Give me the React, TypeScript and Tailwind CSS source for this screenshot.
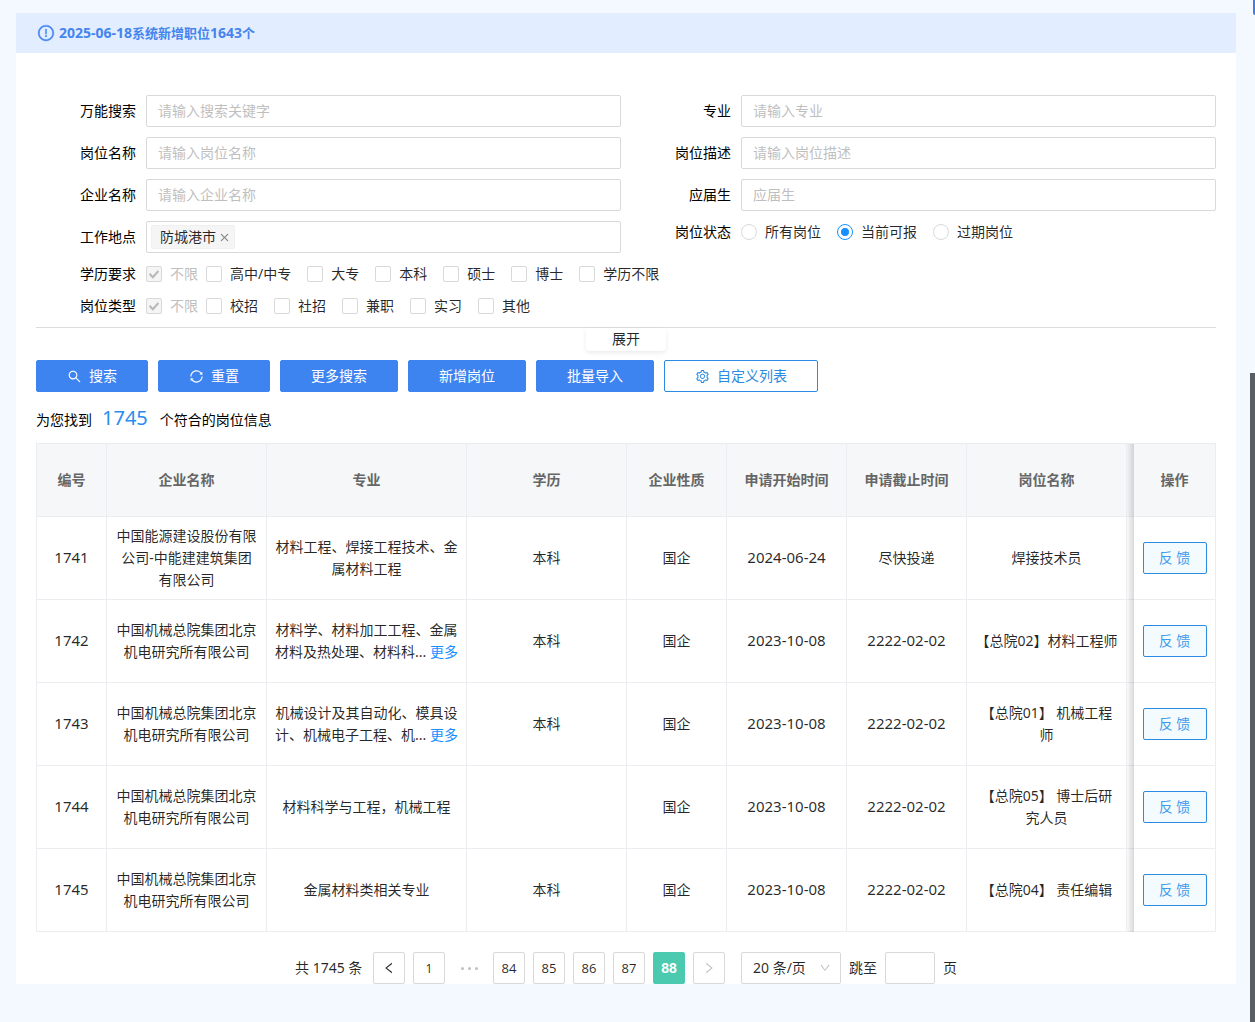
import React, { useState } from "react";
import {
  AiOutlineClose,
  AiOutlineDown,
  AiOutlineExclamationCircle,
  AiOutlineLeft,
  AiOutlineRight,
  AiOutlineSearch,
  AiOutlineSetting,
  AiOutlineSync,
} from "react-icons/ai";

type Job = {
  id: number;
  company: string;
  major: string;
  more?: boolean;
  degree: string;
  nature: string;
  start: string;
  end: string;
  title: string;
};

const jobs: Job[] = [
  { id: 1741, company: "中国能源建设股份有限公司-中能建建筑集团有限公司", major: "材料工程、焊接工程技术、金属材料工程", degree: "本科", nature: "国企", start: "2024-06-24", end: "尽快投递", title: "焊接技术员" },
  { id: 1742, company: "中国机械总院集团北京机电研究所有限公司", major: "材料学、材料加工工程、金属材料及热处理、材料科...", more: true, degree: "本科", nature: "国企", start: "2023-10-08", end: "2222-02-02", title: "【总院02】材料工程师" },
  { id: 1743, company: "中国机械总院集团北京机电研究所有限公司", major: "机械设计及其自动化、模具设计、机械电子工程、机...", more: true, degree: "本科", nature: "国企", start: "2023-10-08", end: "2222-02-02", title: "【总院01】 机械工程师" },
  { id: 1744, company: "中国机械总院集团北京机电研究所有限公司", major: "材料科学与工程，机械工程", degree: "", nature: "国企", start: "2023-10-08", end: "2222-02-02", title: "【总院05】 博士后研究人员" },
  { id: 1745, company: "中国机械总院集团北京机电研究所有限公司", major: "金属材料类相关专业", degree: "本科", nature: "国企", start: "2023-10-08", end: "2222-02-02", title: "【总院04】 责任编辑" },
];

const columns = [
  { name: "编号", width: "w-[70px]" },
  { name: "企业名称", width: "w-[160px]" },
  { name: "专业", width: "w-[200px]" },
  { name: "学历", width: "w-[160px]" },
  { name: "企业性质", width: "w-[100px]" },
  { name: "申请开始时间", width: "w-[120px]" },
  { name: "申请截止时间", width: "w-[120px]" },
  { name: "岗位名称", width: "w-[160px]" },
];

const cell = "border-r border-b border-[#ebedf0] px-2";
const numberCell = `${cell} pb-0.5 text-[15px]`;
const fixedCell =
  "relative border-r border-b border-[#ebedf0] pl-[7px] before:absolute before:-bottom-px before:left-0 before:top-0 before:w-[7px] before:bg-linear-to-r before:from-black/2 before:to-black/15 before:content-['']";
const box = "rounded-xs border border-[#d9d9d9] bg-white";

function TextField({ id, label, placeholder }: { id: string; label: string; placeholder: string }) {
  return (
    <div className="flex items-center gap-2.5">
      <label htmlFor={id} className="w-[100px] shrink-0 text-right text-black">{label}</label>
      <input id={id} type="text" placeholder={placeholder} className={`${box} h-8 min-w-0 flex-1 px-[11px] pb-0.5 outline-none placeholder:text-[#bfbfbf]`} />
    </div>
  );
}

function Check({ label, locked = false }: { label: string; locked?: boolean }) {
  return (
    <label className={locked ? "mr-2 flex items-center gap-2 text-[#bfbfbf]" : "mr-4 flex items-center gap-2"}>
      <span className="relative flex size-4">
        <input
          type="checkbox"
          defaultChecked={locked}
          disabled={locked}
          className="peer size-4 appearance-none rounded-xs border border-[#d9d9d9] bg-white checked:bg-[#1890ff] disabled:bg-[#f5f5f5]"
        />
        <svg viewBox="0 0 16 16" className="pointer-events-none absolute inset-0 hidden size-4 text-white peer-checked:block peer-disabled:text-[#b8b8b8]" fill="none" stroke="currentColor" strokeWidth="2">
          <path d="M3.6 7.8 6.8 11.2 12.4 5" />
        </svg>
      </span>
      {label}
    </label>
  );
}

function CheckRow({ label, items }: { label: string; items: string[] }) {
  return (
    <fieldset className="col-span-2 flex items-center">
      <legend className="float-left mr-2.5 w-[100px] text-right text-black">{label}</legend>
      <Check label="不限" locked />
      {items.map((item) => (
        <Check key={item} label={item} />
      ))}
    </fieldset>
  );
}

function PrimaryButton({ children }: { children: React.ReactNode }) {
  return (
    <button type="button" className="flex h-8 items-center gap-[7px] rounded-xs border border-[#3e84f1] bg-[#3e84f1] px-[30px] text-white">
      {children}
    </button>
  );
}

function PageButton({ page, active = false }: { page: number; active?: boolean }) {
  return (
    <button
      type="button"
      aria-current={active ? "page" : undefined}
      className={
        active
          ? "size-8 rounded-xs bg-[#4ccab0] font-['Liberation_Sans','Noto_Sans_CJK_SC',sans-serif] font-bold text-white"
          : `${box} size-8 font-['Open_Sans','Noto_Sans_CJK_SC',sans-serif] text-[13px]`
      }
    >
      {page}
    </button>
  );
}

export default function App() {
  const [status, setStatus] = useState("当前可报");
  const [tagged, setTagged] = useState(true);

  return (
    <div className="relative min-h-screen bg-[#f4f8ff] pt-[13px] pr-[19px] pb-9 pl-4 font-['Noto_Sans','Noto_Sans_CJK_SC',sans-serif] text-sm leading-[22px] text-black/85">
      <main className="bg-white">
        <div className="flex h-10 items-center gap-1 bg-[#e2eeff] px-[21px] text-[13px] font-bold text-[#4684ee]">
          <AiOutlineExclamationCircle className="size-[18px]" strokeWidth={24} />
          <p>
            <span className="text-sm">2025-06-18</span>系统新增职位<span className="text-sm">1643</span>个
          </p>
        </div>

        <div className="px-5 pt-[42px]">
          <form onSubmit={(e) => e.preventDefault()}>
            <div className="grid grid-cols-2 gap-2.5 border-b border-[#dcdcdc] pb-2.5">
              <TextField id="keyword" label="万能搜索" placeholder="请输入搜索关键字" />
              <TextField id="major" label="专业" placeholder="请输入专业" />
              <TextField id="post" label="岗位名称" placeholder="请输入岗位名称" />
              <TextField id="description" label="岗位描述" placeholder="请输入岗位描述" />
              <TextField id="company" label="企业名称" placeholder="请输入企业名称" />
              <TextField id="graduate" label="应届生" placeholder="应届生" />
              <div className="flex items-center gap-2.5">
                <label htmlFor="place" className="w-[100px] shrink-0 text-right text-black">工作地点</label>
                <div className={`${box} flex h-8 min-w-0 flex-1 items-center px-1`}>
                  {tagged && (
                    <span className="flex h-6 items-center gap-[3px] rounded-xs border border-[#f0f0f0] bg-[#f5f5f5] pr-1 pl-2">
                      防城港市
                      <button type="button" aria-label="移除" onClick={() => setTagged(false)} className="text-black/45">
                        <AiOutlineClose className="size-[11px]" strokeWidth={20} />
                      </button>
                    </span>
                  )}
                  <input id="place" type="text" className="min-w-0 flex-1 px-1 outline-none" />
                </div>
              </div>
              <fieldset className="flex items-start">
                <legend className="float-left mr-2.5 w-[100px] text-right text-black">岗位状态</legend>
                {["所有岗位", "当前可报", "过期岗位"].map((name) => (
                  <label key={name} className="mr-4 flex items-center gap-2">
                    <input
                      type="radio"
                      name="status"
                      checked={status === name}
                      onChange={() => setStatus(name)}
                      className="size-4 appearance-none rounded-full border border-[#d9d9d9] bg-white p-[3px] checked:border-[#1890ff] checked:bg-[#1890ff] checked:bg-clip-content"
                    />
                    {name}
                  </label>
                ))}
              </fieldset>
              <CheckRow label="学历要求" items={["高中/中专", "大专", "本科", "硕士", "博士", "学历不限"]} />
              <CheckRow label="岗位类型" items={["校招", "社招", "兼职", "实习", "其他"]} />
            </div>
            <button type="button" className="mx-auto block h-[23px] w-20 rounded-b bg-white pb-0.5 shadow-[0_2px_4px_rgba(0,0,0,0.08)]">
              展开
            </button>

            <div className="mt-[9px] flex flex-wrap gap-2.5">
              <PrimaryButton>
                <AiOutlineSearch className="size-[15px]" />
                搜索
              </PrimaryButton>
              <PrimaryButton>
                <AiOutlineSync className="size-[15px]" />
                重置
              </PrimaryButton>
              <PrimaryButton>更多搜索</PrimaryButton>
              <PrimaryButton>新增岗位</PrimaryButton>
              <PrimaryButton>批量导入</PrimaryButton>
              <button type="button" className="flex h-8 items-center gap-[7px] rounded-xs border border-[#2a8be0] bg-white px-[30px] text-[#2a8be0]">
                <AiOutlineSetting className="size-[15px]" />
                自定义列表
              </button>
            </div>
          </form>

          <p className="mt-2.5 flex h-8 items-baseline text-black">
            为您找到
            <span className="mr-3 ml-2.5 text-xl leading-8 text-[#2a8cf0]">1745</span>
            个符合的岗位信息
          </p>

          <table className="mt-[9px] w-full table-fixed border-separate border-spacing-0 border-t border-l border-[#ebedf0] text-center">
            <colgroup>
              {columns.map((c) => (
                <col key={c.name} className={c.width} />
              ))}
              <col className="w-[89px]" />
            </colgroup>
            <thead className="bg-[#f5f7f8] text-[#666666]">
              <tr className="h-[73px]">
                {columns.map((c) => (
                  <th key={c.name} scope="col" className={`${cell} font-bold`}>{c.name}</th>
                ))}
                <th scope="col" className={`${fixedCell} font-bold`}>操作</th>
              </tr>
            </thead>
            <tbody>
              {jobs.map((job) => (
                <tr key={job.id} className="h-[83px]">
                  <td className={numberCell}>{job.id}</td>
                  <td className={cell}>{job.company}</td>
                  <td className={cell}>
                    {job.major}
                    {job.more && <> <a href="#more" className="text-[#1890ff]">更多</a></>}
                  </td>
                  <td className={cell}>{job.degree}</td>
                  <td className={cell}>{job.nature}</td>
                  <td className={numberCell}>{job.start}</td>
                  <td className={job.end.startsWith("2") ? numberCell : cell}>{job.end}</td>
                  <td className={cell}>{job.title}</td>
                  <td className={fixedCell}>
                    <button type="button" className="h-8 w-16 rounded-xs border border-[#2a8be0] bg-[#f4fbff] text-[#3f9bea]">
                      反 馈
                    </button>
                  </td>
                </tr>
              ))}
            </tbody>
          </table>

          <nav aria-label="分页" className="mt-5 flex items-center justify-center gap-2">
            <span className="w-[70px]">共 1745 条</span>
            <button type="button" aria-label="上一页" className={`${box} flex size-8 items-center justify-center`}>
              <AiOutlineLeft className="size-3.5" />
            </button>
            <PageButton page={1} />
            <span className="flex w-8 items-center justify-center gap-1" aria-hidden="true">
              <i className="size-[3px] rounded-full bg-[#bfbfbf]" />
              <i className="size-[3px] rounded-full bg-[#bfbfbf]" />
              <i className="size-[3px] rounded-full bg-[#bfbfbf]" />
            </span>
            <PageButton page={84} />
            <PageButton page={85} />
            <PageButton page={86} />
            <PageButton page={87} />
            <PageButton page={88} active />
            <button type="button" aria-label="下一页" disabled className={`${box} flex size-8 items-center justify-center text-[#bfbfbf]`}>
              <AiOutlineRight className="size-3.5" />
            </button>
            <span className="relative ml-2">
              <select aria-label="每页条数" className={`${box} block h-8 w-[100px] appearance-none px-[11px]`} defaultValue="20">
                <option value="20">20 条/页</option>
                <option value="50">50 条/页</option>
              </select>
              <AiOutlineDown className="pointer-events-none absolute top-2.5 right-2.5 size-3 text-[#bfbfbf]" />
            </span>
            <label htmlFor="jump">跳至</label>
            <input id="jump" type="text" className={`${box} h-8 w-[50px] px-2 outline-none`} />
            <span>页</span>
          </nav>
        </div>
      </main>

      <div className="absolute top-0 right-0 h-[15px] w-0.5 rounded-bl bg-[#3e7fe0]" />
      <div className="absolute top-[373px] right-0 bottom-0 w-[5px] bg-[#595d64]" />
    </div>
  );
}
